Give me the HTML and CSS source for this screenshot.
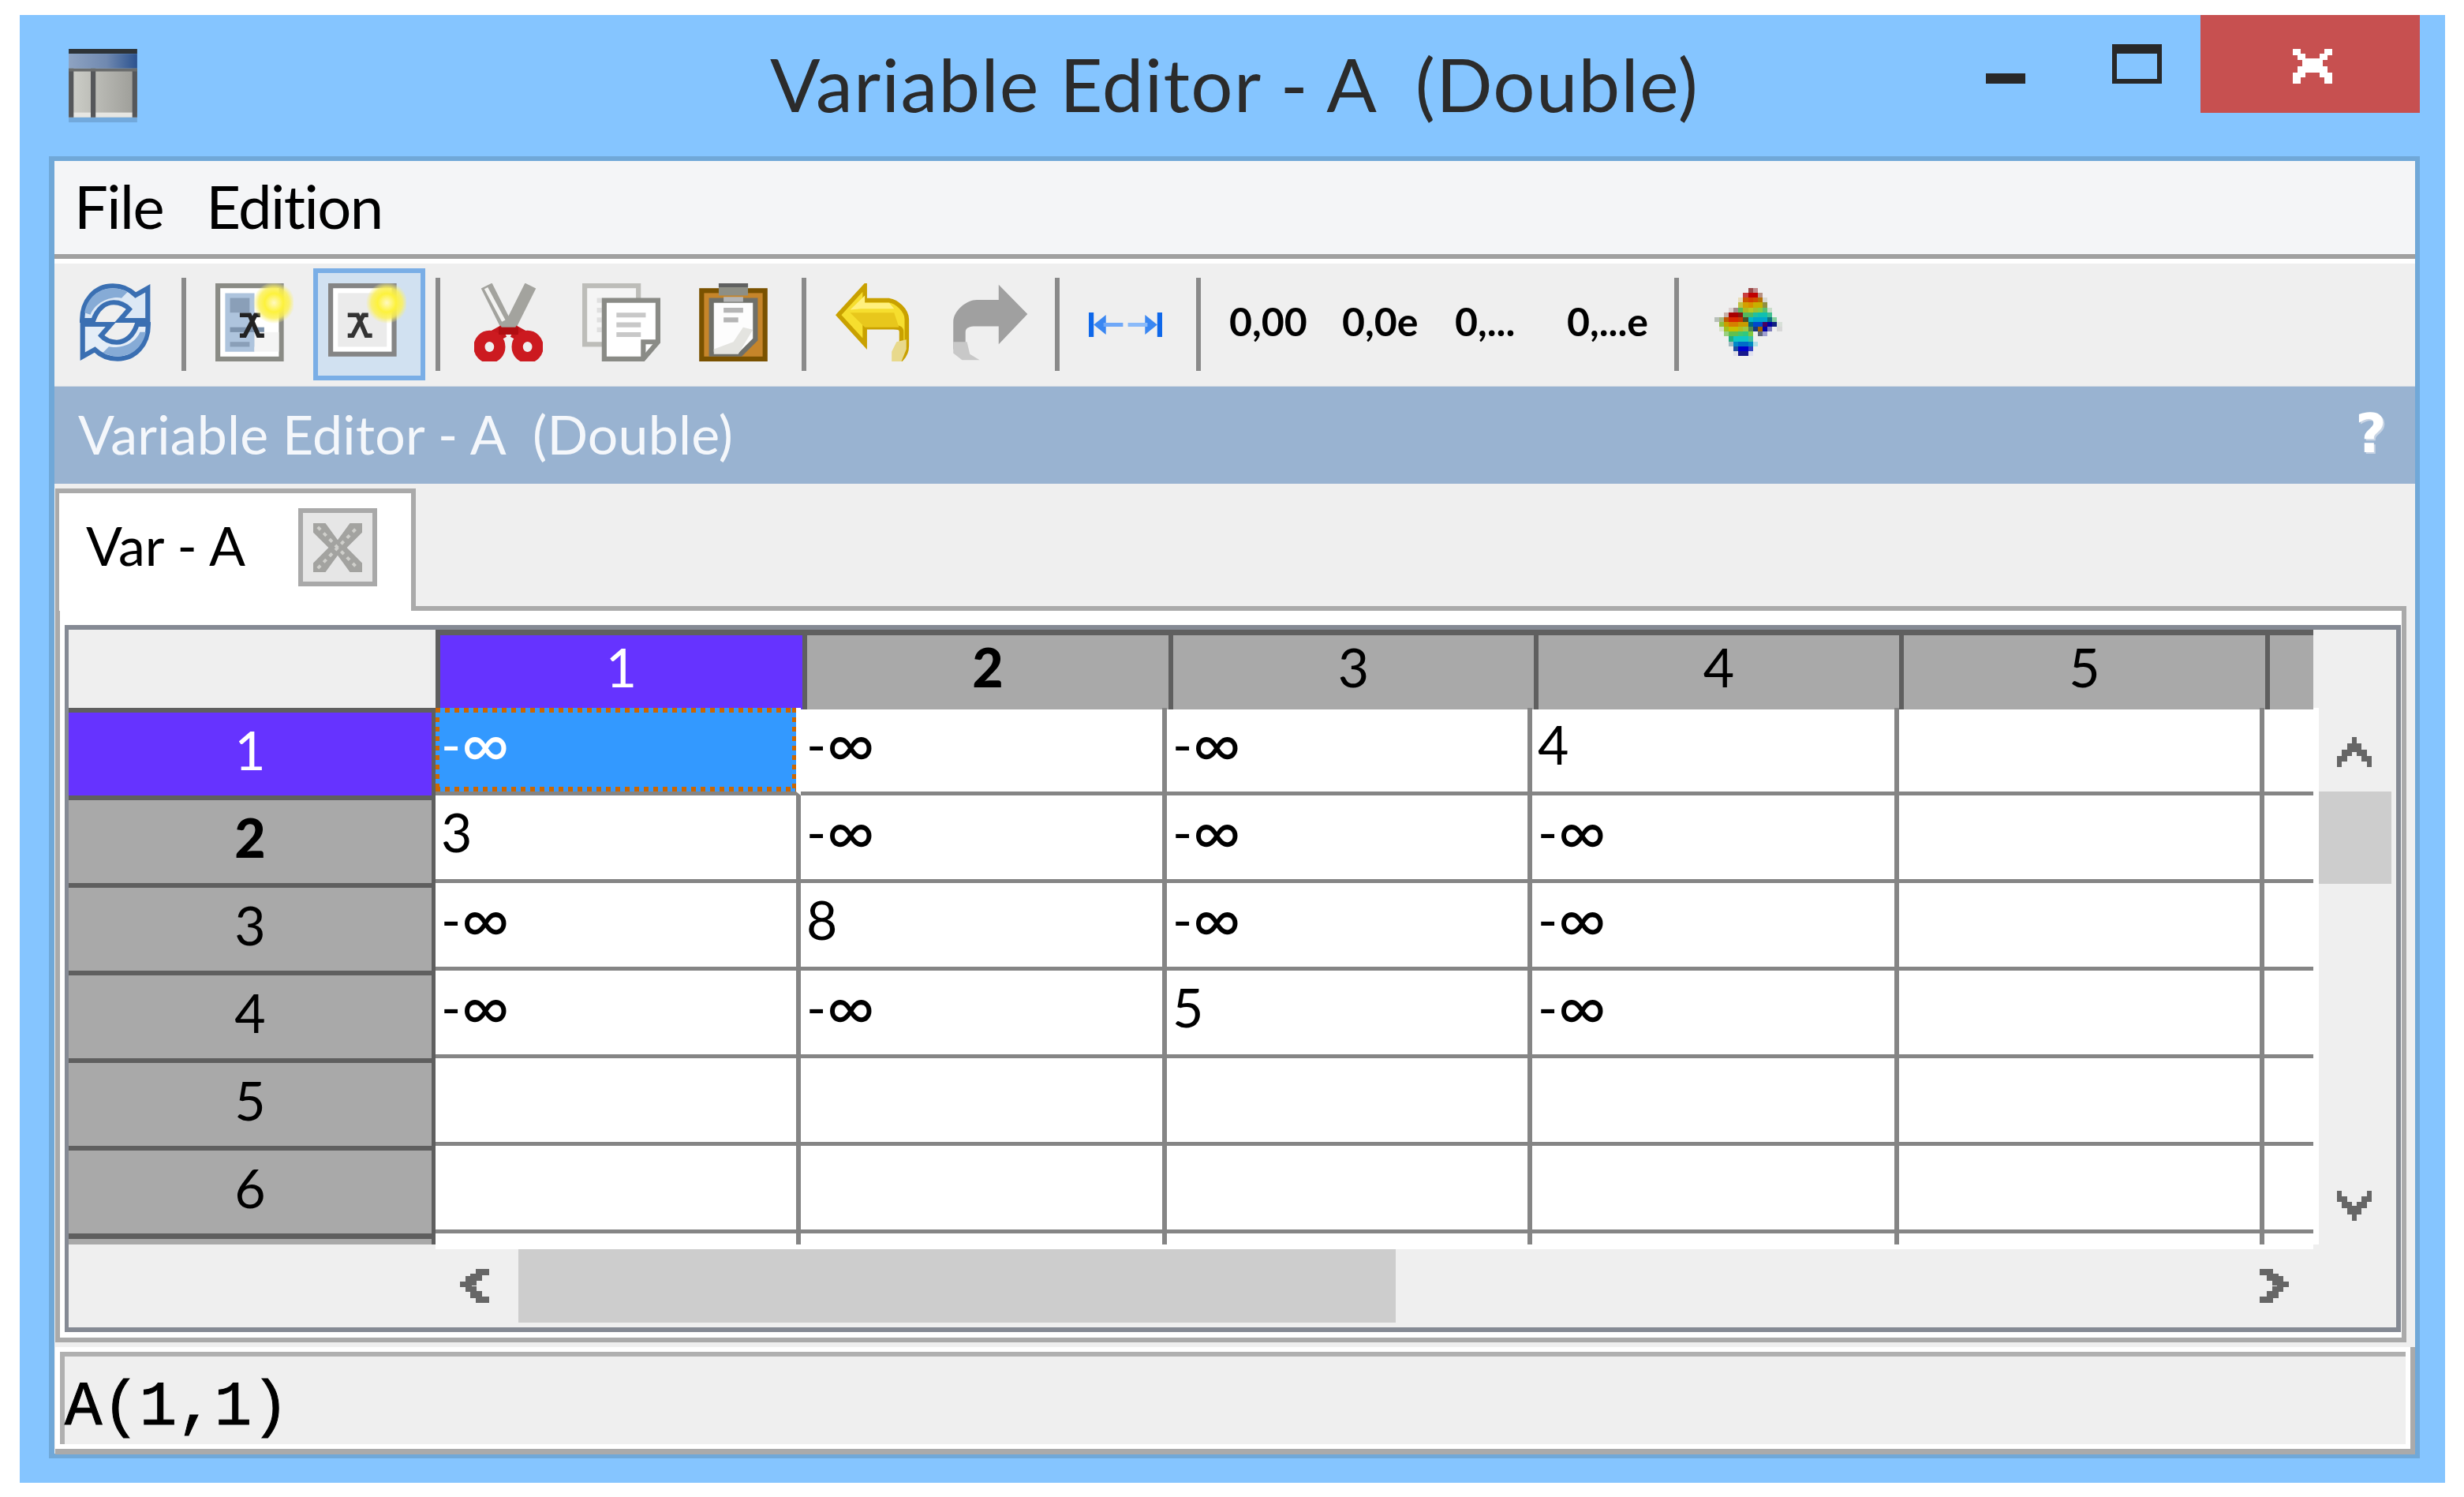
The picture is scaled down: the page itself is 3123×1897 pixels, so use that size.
FILE: index.html
```html
<!DOCTYPE html>
<html lang="en">
<head>
<meta charset="utf-8">
<title>Variable Editor - A (Double)</title>
<link rel="stylesheet" href="styles.css">
</head>
<body>
<div class="window">
  <header class="titlebar">
    <svg class="app-icon" viewBox="0 0 14 15" aria-hidden="true">
      <defs>
        <linearGradient id="capg" x1="0" x2="1" y1="0" y2="0"><stop offset="0" stop-color="#8ea3c2"/><stop offset=".55" stop-color="#7089b0"/><stop offset="1" stop-color="#2b528f"/></linearGradient>
        <linearGradient id="bodyg" x1="0" x2="1" y1="0" y2="0"><stop offset="0" stop-color="#cfd0ca"/><stop offset="1" stop-color="#9c9c97"/></linearGradient>
        <radialGradient id="bulb"><stop offset="0" stop-color="#fff9c0"/><stop offset=".45" stop-color="#fdf23c"/><stop offset=".75" stop-color="#fbf05a" stop-opacity=".85"/><stop offset="1" stop-color="#f8f080" stop-opacity=".1"/></radialGradient>
      </defs>
      <rect width="14" height="1" fill="#2d3338"/>
      <rect y="1" width="14" height="3" fill="url(#capg)"/>
      <rect y="4" width="14" height="10" fill="url(#bodyg)"/>
      <rect y="13" width="14" height="1" fill="#e6e6e2"/>
      <rect y="14" width="14" height="1" fill="#72a9dc"/>
      <path d="M.5 4v10M5 4v10M13.500 4v10" stroke="#55575a" stroke-width="1"/>
      <rect y="4" width="14" height=".6" fill="#6a6c6c"/>
    </svg>
    <h1 class="win-title">Variable Editor - A  (Double)</h1>
    <span class="win-min"></span>
    <span class="win-max"></span>
    <span class="win-close">
      <svg class="close-x" viewBox="0 0 50 44" aria-hidden="true"><path d="M0 0h10v6h6v6h18V6h6V0h10v8h-6v6h-6v8h6v8h6v14H40v-8h-6v-6H16v6h-6v8H0V30h6v-8h6v-8H6V8H0z" fill="#fff"/></svg>
    </span>
  </header>

  <div class="frame">
    <nav class="menubar"><span>File</span><span>Edition</span></nav>

    <div class="toolbar">
      <svg class="ico i90" viewBox="0 0 14.600 16" aria-hidden="true">
        <path d="M.5 7.600C.5 3.400 3.200.5 6.800.5c1.900 0 3.500.7 4.700 1.900L14 1v6.600H8.200l2-2.300C9.400 4.400 8.300 3.900 7 3.900c-1.800 0-3.400 1.300-4.200 3.700z" fill="#dce8f5" stroke="#3a6fb2"/>
        <path d="M1 6C1.600 3 3.800 1 6.800 1c1 0 2 .2 3 .8L8.600 3C7 2.600 3.500 3.400 2.200 6.400z" fill="#86abd6"/>
        <path d="M14.100 8.400c0 4.200-2.700 7.100-6.300 7.100-1.900 0-3.500-.7-4.700-1.900L.6 15V8.400h5.800l-2 2.300c.8.900 1.900 1.400 3.200 1.400 1.800 0 3.400-1.300 4.200-3.700z" fill="#e4edf7" stroke="#3a6fb2"/>
        <path d="M13.600 10c-.6 3-2.800 5-5.800 5-1 0-2-.2-3-.8L6 13c1.600.4 5.100 0 6.400-3z" fill="#86abd6"/>
      </svg>
      <span class="sep s39"></span>
      <svg class="ico i99 m37" viewBox="0 0 16 16" aria-hidden="true">
        <rect x=".5" y=".5" width="13" height="15" fill="#fff" stroke="#8a8b85"/>
        <path d="M2 2h6v8h3v3H8v1H2z" fill="#aec4dd"/>
        <rect x="3" y="3" width="4" height="3" fill="#8a9fb8"/>
        <rect x="3" y="9" width="7" height="1" fill="#7d93ad"/>
        <rect x="3" y="12" width="4" height="1" fill="#8a9fb8"/>
        <rect x="8" y="10" width="5" height="4" fill="#f4f4f4"/>
        <path d="M5 6.500h2l1.800 4.200h1.200M5 10.700h1l2.200-4.200h1" fill="none" stroke="#222" stroke-width=".9"/>
        <circle cx="12" cy="4" r="4.200" fill="url(#bulb)"/>
      </svg>
      <span class="tool-active">
        <svg class="ico i99" viewBox="0 0 16 16" aria-hidden="true">
          <rect x=".5" y=".5" width="13" height="14" fill="#fff" stroke="#858585"/>
          <rect x="2" y="2" width="10" height="11" fill="#ebebeb"/>
          <path d="M4 6.500h2l1.800 4.200h1.200M4 10.700h1l2.200-4.200h1" fill="none" stroke="#333" stroke-width=".9"/>
          <circle cx="12" cy="4" r="4.200" fill="url(#bulb)"/>
        </svg>
      </span>
      <span class="sep s13"></span>
      <svg class="ico i87 m43" viewBox="0 0 14 16" aria-hidden="true">
        <path d="M2.500.5l4.500 9M11.500.5L7 9.500" stroke="#a3a39e" stroke-width="2.500" fill="none"/>
        <path d="M2.400 1l3.600 6.700" stroke="#f2f2f0" stroke-width=".8"/>
        <path d="M6 9.800L3.800 11M8 9.800l2.200 1.200" stroke="#c5161c" stroke-width="2.600"/>
        <ellipse cx="3.100" cy="13" rx="2.100" ry="2.200" fill="none" stroke="#cc1a20" stroke-width="2.300"/>
        <ellipse cx="10.900" cy="13" rx="2.100" ry="2.200" fill="none" stroke="#cc1a20" stroke-width="2.300"/>
        <path d="M5 9h4v1.500H5z" fill="#b00d12"/>
      </svg>
      <svg class="ico i99 m50" viewBox="0 0 16 16" aria-hidden="true">
        <rect x=".5" y=".5" width="11" height="12" fill="#f5f5f5" stroke="#bdbdb9"/>
        <path d="M3 3h1v1H3zM3 5h1v1H3zM3 7h1v1H3zM3 9h1v1H3z" fill="#dfdfdf"/>
        <path d="M4.500 3.500h11v8.500l-3 3.500h-8z" fill="#fff" stroke="#8a8b86"/>
        <path d="M7 6h6v1H7zM7 8h5v1H7zM7 10h5v1H7z" fill="#c8c8c8"/>
        <path d="M12.500 15.500V12h3" fill="none" stroke="#8a8b86"/>
      </svg>
      <svg class="ico i87 m49" viewBox="0 0 14 16" aria-hidden="true">
        <rect x=".5" y="1.500" width="13" height="14" fill="#c6852a" stroke="#7a5200"/>
        <rect x="4" y="0" width="6" height="2.500" fill="#8e8f85"/>
        <rect x="4" y="0" width="6" height=".8" fill="#5f6060"/>
        <path d="M2.500 3.500h9v8l-3 3h-6z" fill="#fdfdfd" stroke="#6f706a"/>
        <path d="M5 2.800h4v1H5zM5 5h4v1H5zM5 7h3v1H5z" fill="#b5b5b5"/>
        <path d="M3 13.500l4-1.500 2-3 2 .500-3 5H3z" fill="#e4e4e0"/>
      </svg>
      <span class="sep s43"></span>
      <svg class="ico i99 m37" viewBox="0 0 16 16" aria-hidden="true">
        <path d="M.6 6.500L6 .6v2.900h5c1.500.2 3.600 2 3.600 3.900v5.400c0 1.400-.6 2.200-1.100 2.700V9.900c0-1-1.100-.9-2-.9H6v3.400z" fill="#f6de2e" stroke="#c9a100" stroke-width=".9"/>
        <path d="M3 6h9l1 3H6z" fill="#e8c71c"/>
        <path d="M11.500 14l1-2 2-.5v2l-1 2.500h-2z" fill="#e8d98c"/>
        <path d="M3 5.400L6 2.500V4h5l1 1.200H5.200z" fill="#fff07e"/>
      </svg>
      <svg class="ico i99 m49" viewBox="0 0 16 16" aria-hidden="true">
        <path d="M15.400 6.300L9.500.3v3.100H5C3 3.400.2 5.500.2 8v5.500h2.500V10c0-1 1-1.200 2-1.200h4.800v3.700z" fill="#a0a0a0"/>
        <path d="M.2 12h2.800l.6 2.500 2 1.200H2L.2 14.300z" fill="#c8c8c8"/>
      </svg>
      <span class="sep s31"></span>
      <svg class="ico fit m37" viewBox="0 0 15 5" aria-hidden="true">
        <path d="M0 0h1v5H0zM14 0h1v5h-1z" fill="#0f68ea"/>
        <path d="M1 2.500l2.500-2v4zM14 2.500l-2.500-2v4z" fill="#3a87f2"/>
        <path d="M3 2.100h4v.8H3z" fill="#6fa8f8"/><path d="M8 2.100h4v.8H8z" fill="#8abaf9"/>
      </svg>
      <span class="sep s43"></span>
      <div class="formats"><span>0,00</span><span>0,0e</span><span>0,...</span><span>0,...e</span></div>
      <span class="sep"></span>
      <svg class="ico surface" viewBox="0 0 15 14" shape-rendering="crispEdges" aria-hidden="true">
        <rect x="8" y="0" width="1" height="1" fill="#9c4a4a"/><rect x="9" y="0" width="1" height="1" fill="#c08a8a"/>
        <rect x="7" y="1" width="1" height="1" fill="#c84040"/><rect x="8" y="1" width="2" height="1" fill="#c00000"/><rect x="10" y="1" width="1" height="1" fill="#b89080"/>
        <rect x="6" y="2" width="1" height="1" fill="#e8dcb8"/><rect x="7" y="2" width="1" height="1" fill="#cc5500"/><rect x="8" y="2" width="1" height="1" fill="#d64000"/><rect x="9" y="2" width="1" height="1" fill="#d05000"/><rect x="10" y="2" width="1" height="1" fill="#b87000"/><rect x="11" y="2" width="1" height="1" fill="#d8d8d0"/>
        <rect x="6" y="3" width="1" height="1" fill="#c0c040"/><rect x="7" y="3" width="1" height="1" fill="#d4a000"/><rect x="8" y="3" width="1" height="1" fill="#d89000"/><rect x="9" y="3" width="2" height="1" fill="#c8b000"/><rect x="11" y="3" width="1" height="1" fill="#909040"/>
        <rect x="4" y="4" width="1" height="1" fill="#dcd0d0"/><rect x="5" y="4" width="1" height="1" fill="#a08888"/><rect x="6" y="4" width="1" height="1" fill="#58b858"/><rect x="7" y="4" width="1" height="1" fill="#b0b820"/><rect x="8" y="4" width="1" height="1" fill="#b8c820"/><rect x="9" y="4" width="1" height="1" fill="#a0c030"/><rect x="10" y="4" width="1" height="1" fill="#88cc40"/><rect x="11" y="4" width="1" height="1" fill="#58c070"/><rect x="12" y="4" width="1" height="1" fill="#c8dcc8"/>
        <rect x="3" y="5" width="1" height="1" fill="#c8b0a8"/><rect x="4" y="5" width="2" height="1" fill="#a80000"/><rect x="6" y="5" width="1" height="1" fill="#881810"/><rect x="7" y="5" width="2" height="1" fill="#50b860"/><rect x="9" y="5" width="1" height="1" fill="#20c0a0"/><rect x="10" y="5" width="2" height="1" fill="#10c0b0"/><rect x="12" y="5" width="1" height="1" fill="#40c090"/>
        <rect x="1" y="6" width="1" height="1" fill="#b8c0b8"/><rect x="2" y="6" width="1" height="1" fill="#a8b880"/><rect x="3" y="6" width="1" height="1" fill="#c05800"/><rect x="4" y="6" width="2" height="1" fill="#d82800"/><rect x="6" y="6" width="1" height="1" fill="#c83800"/><rect x="7" y="6" width="1" height="1" fill="#485028"/><rect x="8" y="6" width="1" height="1" fill="#00b8c8"/><rect x="9" y="6" width="3" height="1" fill="#00a4cc"/><rect x="12" y="6" width="1" height="1" fill="#107080"/><rect x="13" y="6" width="1" height="1" fill="#88d0a0"/>
        <rect x="2" y="7" width="1" height="1" fill="#90c040"/><rect x="3" y="7" width="1" height="1" fill="#c8a000"/><rect x="4" y="7" width="2" height="1" fill="#d68000"/><rect x="6" y="7" width="2" height="1" fill="#c89c00"/><rect x="8" y="7" width="1" height="1" fill="#006880"/><rect x="9" y="7" width="2" height="1" fill="#0048cc"/><rect x="11" y="7" width="1" height="1" fill="#480060"/><rect x="12" y="7" width="1" height="1" fill="#0000a0"/><rect x="13" y="7" width="1" height="1" fill="#102080"/><rect x="14" y="7" width="1" height="1" fill="#d8e0d8"/>
        <rect x="2" y="8" width="1" height="1" fill="#d8e0c8"/><rect x="3" y="8" width="1" height="1" fill="#a0c020"/><rect x="4" y="8" width="2" height="1" fill="#c8c000"/><rect x="6" y="8" width="1" height="1" fill="#b0c020"/><rect x="7" y="8" width="1" height="1" fill="#a0c840"/><rect x="8" y="8" width="1" height="1" fill="#508850"/><rect x="9" y="8" width="1" height="1" fill="#183880"/><rect x="10" y="8" width="1" height="1" fill="#a06000"/><rect x="11" y="8" width="1" height="1" fill="#0000a8"/><rect x="12" y="8" width="1" height="1" fill="#7878b8"/><rect x="14" y="8" width="1" height="1" fill="#d8d8d8"/>
        <rect x="3" y="9" width="1" height="1" fill="#98d080"/><rect x="4" y="9" width="2" height="1" fill="#60c050"/><rect x="6" y="9" width="1" height="1" fill="#40c870"/><rect x="7" y="9" width="1" height="1" fill="#30c880"/><rect x="8" y="9" width="1" height="1" fill="#80c840"/><rect x="10" y="9" width="1" height="1" fill="#606878"/><rect x="11" y="9" width="1" height="1" fill="#a0a0d0"/>
        <rect x="4" y="10" width="1" height="1" fill="#20b080"/><rect x="5" y="10" width="3" height="1" fill="#10c8c4"/><rect x="8" y="10" width="1" height="1" fill="#40c0a0"/>
        <rect x="4" y="11" width="1" height="1" fill="#a0b8c0"/><rect x="5" y="11" width="1" height="1" fill="#0088c8"/><rect x="6" y="11" width="2" height="1" fill="#006cc8"/><rect x="8" y="11" width="1" height="1" fill="#0088c0"/><rect x="9" y="11" width="1" height="1" fill="#b0e0e8"/>
        <rect x="5" y="12" width="1" height="1" fill="#2050a0"/><rect x="6" y="12" width="2" height="1" fill="#0000cc"/><rect x="8" y="12" width="1" height="1" fill="#3040c0"/>
        <rect x="5" y="13" width="1" height="1" fill="#e0e0e8"/><rect x="6" y="13" width="2" height="1" fill="#18188c"/><rect x="8" y="13" width="1" height="1" fill="#e0e0f0"/>
      </svg>
    </div>

    <div class="panel-head"><span>Variable Editor - A  (Double)</span><span class="help">?</span></div>

    <div class="tabs">
      <div class="tab">
        <span>Var - A</span>
        <span class="tab-close">
          <svg viewBox="0 0 64 64" aria-hidden="true"><path d="M0 0h16l16 22L48 0h16v12L44 32l20 20v12H48L32 42 16 64H0V52l20-20L0 12z" fill="#a3a3a0"/><path d="M6 5l26 27L58 5M6 59l26-27 26 27" fill="none" stroke="#d0d0cc" stroke-width="4" stroke-dasharray="5 6"/></svg>
        </span>
      </div>
    </div>

    <div class="pane">
      <div class="grid-frame">
        <div class="table">
          <div class="thead">
            <div class="corner"></div>
            <div class="th sel">1</div><div class="th b">2</div><div class="th">3</div><div class="th">4</div><div class="th">5</div><div class="th"></div>
          </div>
          <div class="row">
            <div class="rh sel">1</div><div class="td cur">-<span class="inf">∞</span></div><div class="td">-<span class="inf">∞</span></div><div class="td">-<span class="inf">∞</span></div><div class="td">4</div><div class="td"></div><div class="td"></div>
          </div>
          <div class="row">
            <div class="rh b">2</div><div class="td">3</div><div class="td">-<span class="inf">∞</span></div><div class="td">-<span class="inf">∞</span></div><div class="td">-<span class="inf">∞</span></div><div class="td"></div><div class="td"></div>
          </div>
          <div class="row">
            <div class="rh">3</div><div class="td">-<span class="inf">∞</span></div><div class="td">8</div><div class="td">-<span class="inf">∞</span></div><div class="td">-<span class="inf">∞</span></div><div class="td"></div><div class="td"></div>
          </div>
          <div class="row">
            <div class="rh">4</div><div class="td">-<span class="inf">∞</span></div><div class="td">-<span class="inf">∞</span></div><div class="td">5</div><div class="td">-<span class="inf">∞</span></div><div class="td"></div><div class="td"></div>
          </div>
          <div class="row">
            <div class="rh">5</div><div class="td"></div><div class="td"></div><div class="td"></div><div class="td"></div><div class="td"></div><div class="td"></div>
          </div>
          <div class="row">
            <div class="rh">6</div><div class="td"></div><div class="td"></div><div class="td"></div><div class="td"></div><div class="td"></div><div class="td"></div>
          </div>
          <div class="row stub">
            <div class="rh"></div><div class="td"></div><div class="td"></div><div class="td"></div><div class="td"></div><div class="td"></div><div class="td"></div>
          </div>
          <div class="strip"></div>
        </div>
        <div class="vscroll">
          <svg class="arrow-v" viewBox="0 0 44 38" aria-hidden="true"><path d="M19 0h6v8h6v8h7v8h6v14h-6v-7h-7v-7h-6v-5h-6v5h-6v7H6v7H0V24h6v-8h7V8h6z" fill="#666"/></svg>
          <div class="vthumb"></div>
          <svg class="arrow-v down" viewBox="0 0 44 38" aria-hidden="true"><path d="M19 38h6v-8h6v-8h7v-8h6V0h-6v7h-7v7h-6v5h-6v-5h-6V7H6V0H0v14h6v8h7v8h6z" fill="#666"/></svg>
        </div>
        <div class="hscroll">
          <svg class="arrow-h" viewBox="0 0 37 43" aria-hidden="true"><path d="M20 0h17v8H28v7h-7v6h-6v1h6v6h7v7h9v8H20v-6h-7v-8H7v-6H0v-7h7v-7h6V6h7z" fill="#666"/></svg>
          <div class="hthumb"></div>
          <svg class="arrow-h right" viewBox="0 0 37 43" aria-hidden="true"><path d="M17 0H0v8h9v7h7v6h6v1h-6v6H9v7H0v8h17v-6h7v-8h6v-6h7v-7h-7v-7h-6V6h-7z" fill="#666"/></svg>
        </div>
      </div>
    </div>

    <div class="status"><div class="status-in">A(1,1)</div></div>
  </div>
</div>
</body>
</html>
```
FILE: styles.css
```css
* { box-sizing: border-box; }
html, body { margin: 0; background: #fff; }
body { padding: 19px 0 0 25px; font-family: Lato, "Open Sans", sans-serif; color: #000; }

.window { width: 3074px; height: 1860px; background: #85c5ff; display: flex; flex-direction: column; }

/* title bar */
.titlebar { height: 179px; flex: none; display: flex; align-items: flex-start; padding: 0 32px 0 62px; }
.app-icon { width: 87px; height: 93px; margin-top: 43px; flex: none; }
.win-title { margin: 32px 0 0 802px; font-size: 94px; line-height: 110px; font-weight: 400; letter-spacing: 1.3px; color: #2b2b2b; white-space: pre; }
.win-min { margin: 74px 0 0 auto; width: 50px; height: 13px; background: #282828; flex: none; }
.win-max { margin: 37px 0 0 110px; width: 63px; height: 50px; border: 6px solid #282828; border-top-width: 12px; flex: none; }
.win-close { margin-left: 49px; width: 278px; height: 124px; background: #c75050; flex: none; padding: 43px 0 0 117px; }
.close-x { display: block; width: 50px; height: 44px; }

/* client frame */
.frame { margin: 0 32px 0 37px; height: 1650px; border: 6px solid #70a8d8; border-left-width: 7px; display: flex; flex-direction: column; background: #efefef; }

.menubar { height: 124px; flex: none; background: #f4f5f7; border-bottom: 6px solid #a0a0a0; display: flex; align-items: center; gap: 54px; padding: 0 0 4px 25px; font-size: 76px; line-height: 90px; letter-spacing: -1.5px; }

.toolbar { height: 161px; flex: none; background: #efefef; border-top: 6px solid #fff; display: flex; align-items: flex-start; padding: 18px 0 0 32px; }
.ico { display: block; flex: none; margin-top: 7px; filter: blur(.7px); }
.i90 { width: 90px; height: 99px; }
.i99 { width: 99px; height: 99px; }
.i87 { width: 87px; height: 99px; }
.fit { width: 93px; height: 31px; margin-top: 44px; }
.surface { width: 93px; height: 86px; margin: 13px 0 0 38px; }
.m37 { margin-left: 37px; }
.m43 { margin-left: 43px; }
.m49 { margin-left: 49px; }
.m50 { margin-left: 50px; }
.sep { width: 6px; height: 118px; background: #8a8a8a; flex: none; }
.s13 { margin-left: 13px; }
.s31 { margin-left: 31px; }
.s39 { margin-left: 39px; }
.s43 { margin-left: 43px; }
.tool-active { margin: -12px 0 0 25px; width: 142px; height: 142px; flex: none; background: #d1e1f1; border: 6px solid #7aaee6; padding: 7px 0 0 13px; }
.tool-active .ico { margin-top: 6px; }
.formats { margin-left: 36px; width: 564px; display: grid; grid-template-columns: 143px 143px 142px 136px; font-size: 50px; font-weight: 700; line-height: 60px; padding-top: 25px; }

.panel-head { height: 124px; flex: none; background: #99b3d1; border-top: 1px solid #d4dbe4; display: flex; align-items: center; justify-content: space-between; padding: 0 36px 4px 30px; color: #f4f7fb; font-size: 68px; line-height: 80px; letter-spacing: .2px; white-space: pre; }
.help { font-family: "DejaVu Sans", sans-serif; font-weight: 700; font-size: 68px; color: #fff; text-shadow: 2px 2px 0 #c8d4e4; }

.tabs { height: 155px; flex: none; padding: 6px 0 0 1px; display: flex; align-items: flex-start; }
.tab { position: relative; z-index: 1; width: 457px; height: 155px; margin-bottom: -6px; background: #fff; border: 6px solid #aaa; border-width: 6px 6px 0 5px; display: flex; align-items: flex-start; padding-left: 34px; font-size: 68px; line-height: 80px; }
.tab > span:first-child { margin-top: 26px; }
.tab-close { margin: 19px 43px 0 auto; width: 100px; height: 99px; background: #e6e6e6; border: 6px solid #a9a9a9; flex: none; padding: 13px 13px; }
.tab-close svg { display: block; width: 62px; height: 62px; filter: blur(.5px); }

.pane { flex: none; margin-left: 1px; width: 2980px; height: 933px; background: #fff; border: 6px solid #aaa; padding: 18px 1px 6px 6px; }
.grid-frame { height: 896px; border: 6px solid #858a94; border-left-width: 5px; background: #efefef; display: grid; grid-template-columns: 2852px 98px; grid-template-rows: 785px 99px; }

.table { grid-area: 1 / 1; overflow: hidden; font-size: 68px; line-height: 80px; }
.thead { display: grid; grid-template-columns: 465px 465px 464px 463px 463px 464px 61px; height: 99px; padding-right: 7px; }
.corner { background: #efefef; }
.th { background: #a9a9a9; border-top: 7px solid #5f5f5f; border-left: 6px solid #5f5f5f; display: flex; align-items: center; justify-content: center; padding-bottom: 14px; }
.th.sel, .rh.sel { background: #6633ff; color: #fff; }
.b { font-weight: 900; }

.row { display: grid; grid-template-columns: 465px 463px 464px 463px 465px 463px 62px; height: 111px; padding-right: 7px; background: #fff; }
.rh { background: #a9a9a9; border-top: 6px solid #5f5f5f; border-right: 5px solid #5f5f5f; display: flex; align-items: center; justify-content: center; padding-bottom: 12px; }
.td { border-right: 6px solid #858585; border-bottom: 5px solid #858585; padding: 6px 0 0 7px; white-space: nowrap; }
.td:last-child { border-right: 0; }
.inf { font-size: 84px; line-height: 0; vertical-align: -4px; }
.td.cur {
  color: #fff; background-color: #3399ff; border-right-color: #fff;
  background-image: linear-gradient(90deg, #cc6600 50%, transparent 50%), linear-gradient(90deg, #cc6600 50%, transparent 50%), linear-gradient(#cc6600 50%, transparent 50%), linear-gradient(#cc6600 50%, transparent 50%);
  background-size: 12px 6px, 12px 6px, 5px 12px, 5px 12px;
  background-position: 0 0, 0 100%, 0 0, 100% 0;
  background-repeat: repeat-x, repeat-x, repeat-y, repeat-y;
  background-clip: padding-box;
}
.row.stub { height: 14px; }
.stub .td { border-bottom: 0; padding: 0; }
.stub .rh { border-top-width: 7px; padding: 0; }
.strip { height: 6px; margin: 0 7px 0 465px; background: #fff; }

.vscroll { grid-area: 1 / 2; display: flex; flex-direction: column; padding-top: 136px; }
.arrow-v { display: block; width: 44px; height: 38px; margin-left: 23px; flex: none; }
.vthumb { width: 92px; height: 117px; margin-top: 31px; background: #cdcdcd; flex: none; }
.arrow-v.down { margin-top: 389px; }

.hscroll { grid-area: 2 / 1 / 3 / 3; display: flex; align-items: flex-start; padding-left: 496px; }
.arrow-h { display: block; width: 37px; height: 43px; margin-top: 25px; flex: none; }
.hthumb { width: 1112px; height: 93px; margin-left: 37px; background: #cdcdcd; flex: none; }
.arrow-h.right { margin-left: 1095px; }

.status { flex: 1; margin: 6px 0 0 1px; background: #fff; border-right: 6px solid #aaa; border-bottom: 7px solid #aaa; padding: 6px 6px 6px 6px; }
.status-in { height: 117px; background: #efefef; border-top: 6px solid #b0b0b0; border-left: 6px solid #b0b0b0; font-family: "Liberation Mono", monospace; font-size: 79px; line-height: 90px; padding-top: 20px; white-space: pre; -webkit-text-stroke: 1px #000; }
```
